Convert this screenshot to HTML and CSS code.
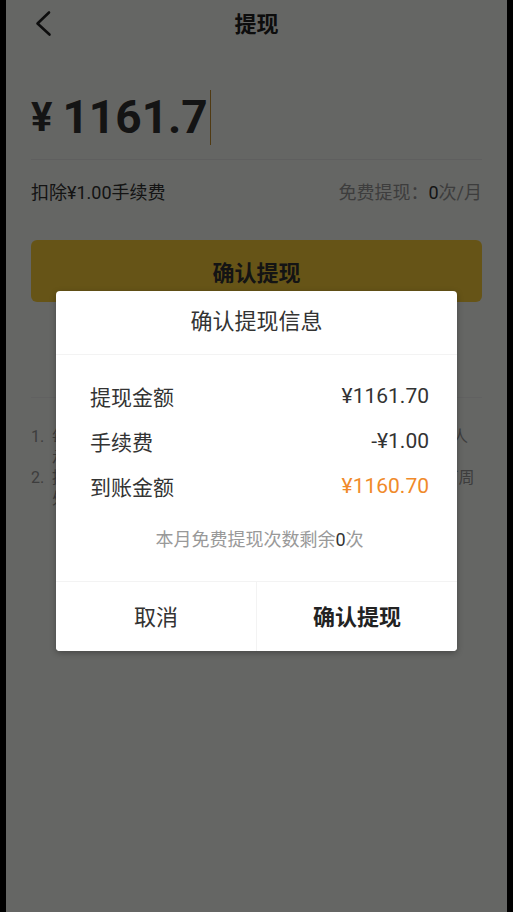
FILE: index.html
```html
<!DOCTYPE html>
<html lang="zh-CN">
<head>
<meta charset="utf-8">
<title>提现</title>
<link rel="stylesheet" href="styles.css">
</head>
<body>
<div class="app">
  <header class="topbar">
    <div class="back">
      <svg class="back-icon" viewBox="0 0 24 30" width="24" height="30" aria-hidden="true">
        <path d="M18 2.5 L6.5 13.5 L18.5 24.5" fill="none" stroke="#222" stroke-width="2.6" stroke-linecap="round" stroke-linejoin="round"/>
      </svg>
    </div>
    <h1 class="title">提现</h1>
    <div class="spacer"></div>
  </header>

  <div class="amount-row">
    <span class="yen">¥</span><span class="amount">1161.7</span><span class="caret"></span>
  </div>

  <div class="fee-row">
    <span class="fee">扣除¥1.00手续费</span>
    <span class="free">免费提现：<b class="num">0</b>次/月</span>
  </div>

  <button class="submit">确认提现</button>

  <section class="tips">
    <div class="tip"><span class="idx">1.</span><span class="tip-text">每月享受免费提现次数，超出后每笔收取手续费，由提现人承担。</span></div>
    <div class="tip"><span class="idx">2.</span><span class="tip-text">提现申请提交后，预计1-3个工作日内到账，节假日顺延下周处理，请耐心等待。</span></div>
  </section>

  <div class="overlay">
    <div class="dialog">
      <div class="dialog-title">确认提现信息</div>
      <div class="dialog-body">
        <div class="line"><span>提现金额</span><span>¥1161.70</span></div>
        <div class="line"><span>手续费</span><span>-¥1.00</span></div>
        <div class="line"><span>到账金额</span><span class="orange">¥1160.70</span></div>
        <p class="note">本月免费提现次数剩余<b class="num">0</b>次</p>
      </div>
      <div class="dialog-actions">
        <button class="act cancel">取消</button>
        <button class="act confirm">确认提现</button>
      </div>
    </div>
  </div>
</div>
</body>
</html>
```

FILE: styles.css
```css
* { box-sizing: border-box; }
html, body { margin: 0; padding: 0; }
body {
  background: #000;
  font-family: Roboto, "Noto Sans CJK SC", sans-serif;
  color: #333;
}
.app {
  position: relative;
  margin: 0 6px;
  width: 501px;
  min-height: 912px;
  background: #fdfffa;
  padding: 0 25px;
  overflow: hidden;
}
.topbar {
  display: grid;
  grid-template-columns: 1fr auto 1fr;
  align-items: center;
  height: 50px;
}
.back { display: flex; align-items: center; }
.back-icon { display: block; }
.title {
  margin: 0;
  font-size: 22px;
  font-weight: 700;
  line-height: 50px;
  color: #222;
}
.amount-row {
  display: flex;
  align-items: center;
  padding-top: 40px;
  padding-bottom: 14px;
  border-bottom: 1px solid #eeeeee;
}
.yen {
  font-size: 40px;
  font-weight: 700;
  line-height: 55px;
  margin-right: 10px;
  color: #333;
}
.amount {
  font-size: 46px;
  font-weight: 700;
  line-height: 55px;
  color: #333;
}
.caret {
  width: 1px;
  height: 55px;
  margin-left: 2px;
  background: #c8922e;
}
.fee-row {
  display: flex;
  justify-content: space-between;
  margin-top: 21px;
  font-size: 18px;
  line-height: 24px;
}
.fee { color: #333; }
.free { color: #999; }
.num { font-weight: 400; color: #333; }
.submit {
  display: block;
  width: 100%;
  height: 62px;
  margin-top: 35px;
  border: 0;
  border-radius: 6px;
  background: #ffd33b;
  font-family: inherit;
  font-size: 22px;
  font-weight: 700;
  color: #333;
}
.tips {
  margin-top: 95px;
  border-top: 1px solid #f3f3f3;
  padding-top: 29px;
  font-size: 16px;
  line-height: 20.5px;
  color: #999;
}
.tip { display: flex; }
.idx { flex: 0 0 21px; }
.tip-text { flex: 1; }

.overlay {
  position: absolute;
  inset: 0;
  background: rgba(0, 0, 0, 0.6);
  display: flex;
  justify-content: center;
  align-items: flex-start;
  padding-top: 291px;
}
.dialog {
  width: 401px;
  background: #fff;
  border-radius: 4px;
  box-shadow: 0 2px 6px rgba(0, 0, 0, 0.3);
  overflow: hidden;
}
.dialog-title {
  height: 64px;
  line-height: 62px;
  text-align: center;
  font-size: 22px;
  color: #333;
  border-bottom: 1px solid #f3f3f3;
}
.dialog-body {
  padding: 18px 28px 26px 34px;
}
.line {
  display: flex;
  justify-content: space-between;
  align-items: center;
  height: 45px;
  font-size: 21px;
  color: #333;
}
.orange { color: #f08a2a; }
.note {
  margin: 17px 0 0;
  line-height: 30px;
  text-align: center;
  font-size: 18px;
  color: #999;
}
.dialog-actions {
  display: flex;
  border-top: 1px solid #f3f3f3;
}
.act {
  flex: 1;
  height: 69px;
  padding: 0 0 3px;
  border: 0;
  background: #fff;
  font-family: inherit;
  font-size: 22px;
  color: #333;
}
.cancel { border-right: 1px solid #f3f3f3; }
.confirm { font-weight: 700; color: #222; }
```
